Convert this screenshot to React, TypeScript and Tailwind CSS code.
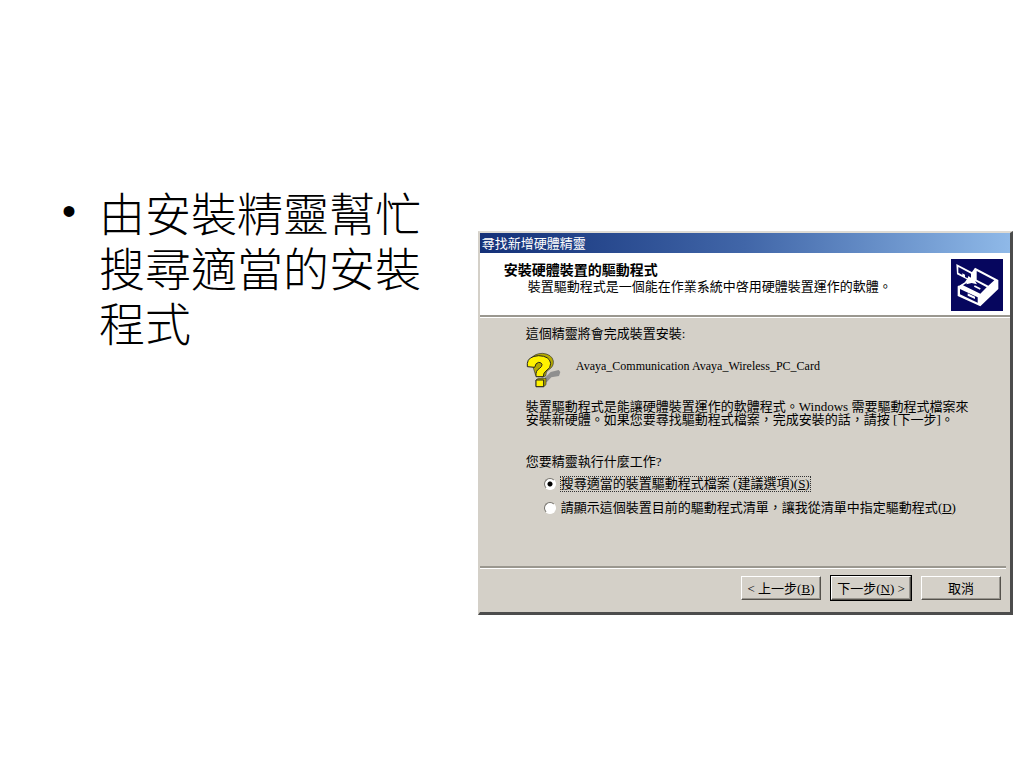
import React from 'react'

const DrawerIcon = () => (
  <svg viewBox="0 0 156 156" className="h-[52px] w-[52px] shrink-0" aria-hidden="true">
    <rect width="156" height="156" fill="#06065e" />
    <path d="M20 82 L44 66 L72 26 L142 63 L142 90 L88 142 L20 111 Z" fill="#fff" />
    <path d="M77 36 L130 64 L112 80 L77 62 Z" fill="#06065e" />
    <path d="M72 66 L107 85 L88 104 L36 79 L48 71 Z" fill="#06065e" />
    <path d="M27 90 L80 115 L80 131 L27 106 Z" fill="#06065e" />
    <path d="M50 103 L72 113 L72 120 L50 110 Z" fill="#fff" />
    <path d="M70 81 L88 90" stroke="#fff" strokeWidth="5" />
    <path d="M16 15 L68 42 L68 58 L78 76 L62 72 L46 76 L50 62 L18 46 Z" fill="#fff" />
    <path d="M22 24 L60 44 L60 56 L52 51 L50 58 L42 54 L42 47 L34 43 L34 48 L22 41 Z" fill="#06065e" />
    <path d="M18 54 L44 68 L24 80 Z" fill="#06065e" />
  </svg>
)

const QuestionIcon = () => (
  <svg viewBox="0 0 108 108" className="h-9 w-9 shrink-0" aria-hidden="true">
    <path d="M57 77 L74 60 L98 54 L103 60 L99 72 L76 76 L62 91 L54 91 Z" fill="#8f8f8f" />
    <path d="M14 22 Q24 4 50 4 Q78 7 82 27 Q84 44 68 53 Q59 58 59 72 L50 75 L29 70 Z" fill="#b5aa00" stroke="#333" strokeWidth="2" />
    <path
      d="M4 34 Q6 13 38 11 Q71 12 74 34 Q75 48 60 57 Q52 62 52 74 L30 74 Q28 55 41 49 Q49 43 48 37 Q46 31 38 31 Q29 32 26 46 L4 44 Z"
      fill="#fff200"
      stroke="#222"
      strokeWidth="3"
    />
    <path d="M30 84 L37 79 L60 79 L60 98 L53 104 L30 104 Z" fill="#b5aa00" stroke="#333" strokeWidth="2" />
    <path d="M30 84 H53 V104 H30 Z" fill="#fff200" stroke="#222" strokeWidth="3" />
  </svg>
)

const options = [
  { id: 'search', label: '搜尋適當的裝置驅動程式檔案 (建議選項)', hotkey: 'S', selected: true },
  { id: 'list', label: '請顯示這個裝置目前的驅動程式清單，讓我從清單中指定驅動程式', hotkey: 'D', selected: false },
]

const buttonStyle =
  'h-6 w-20 border border-t-white border-l-white border-r-[#55524c] border-b-[#55524c] bg-[#d4d0c8] shadow-[inset_-1px_-1px_0_#98958e]'

const WizardDialog = () => (
  <div
    role="dialog"
    aria-labelledby="wizard-title"
    className="border-t-2 border-l-2 border-r-3 border-b-3 border-t-[#dedbd4] border-l-[#d4d0c8] border-r-[#4c4c4c] border-b-[#4c4c4c] bg-[#d4d0c8] text-[13px] leading-[13px] text-black font-['Liberation_Serif','Noto_Sans_CJK_TC',sans-serif]"
  >
    <div
      id="wizard-title"
      className="flex h-5 items-center bg-linear-to-r from-[#143078] via-[#4166a8] to-[#8fb9e8] px-[2px] text-white"
    >
      尋找新增硬體精靈
    </div>

    <header className="flex h-16 items-start justify-between border-b-2 border-[#9a978f] bg-white pt-1.5 pr-[7px] pl-6">
      <div className="pt-1 whitespace-nowrap">
        <h2 className="text-sm leading-4 font-bold">安裝硬體裝置的驅動程式</h2>
        <p className="pl-6 leading-4">裝置驅動程式是一個能在作業系統中啓用硬體裝置運作的軟體。</p>
      </div>
      <DrawerIcon />
    </header>

    <main className="h-[249px] border-t border-white pt-2 pr-4 pl-[46px] whitespace-nowrap">
      <p className="leading-4">這個精靈將會完成裝置安裝:</p>
      <div className="mt-2.5 flex gap-3">
        <QuestionIcon />
        <p className="pt-1.5 pl-0.5 text-xs leading-4">Avaya_Communication Avaya_Wireless_PC_Card</p>
      </div>
      <p className="mt-3">
        裝置驅動程式是能讓硬體裝置運作的軟體程式。Windows 需要驅動程式檔案來
        <br />
        安裝新硬體。如果您要尋找驅動程式檔案，完成安裝的話，請按 [下一步]。
      </p>
      <fieldset className="mt-7">
        <legend className="leading-4">您要精靈執行什麼工作?</legend>
        <div className="mt-1.5 flex flex-col gap-2 pl-4">
          {options.map((option) => (
            <div key={option.id} className="flex h-4 items-center gap-1">
              <input
                type="radio"
                name="task"
                id={option.id}
                defaultChecked={option.selected}
                className="my-0.5 ml-0.5 h-3 w-3 shrink-0 appearance-none rounded-full border border-t-[#77746e] border-l-[#77746e] border-r-white border-b-white bg-white checked:bg-[radial-gradient(circle,#000_2px,#fff_3px)]"
              />
              <label
                htmlFor={option.id}
                className={option.selected ? 'border border-dotted border-[#333] leading-[14px]' : 'border border-transparent leading-[14px]'}
              >
                {option.label}(<u>{option.hotkey}</u>)
              </label>
            </div>
          ))}
        </div>
      </fieldset>
    </main>

    <footer className="mr-1 flex justify-end gap-2.5 border-t-2 border-[#9a978f] pt-2 pr-[5px] pb-3 whitespace-nowrap shadow-[inset_0_1px_0_#fff]">
      <button type="button" className={buttonStyle}>
        &lt; 上一步(<u>B</u>)
      </button>
      <button type="button" className={`${buttonStyle} outline outline-black`}>
        下一步(<u>N</u>) &gt;
      </button>
      <button type="button" className={buttonStyle}>
        取消
      </button>
    </footer>
  </div>
)

const App = () => {
  return (
    <div className="flex min-h-screen items-start bg-white">
      <section className="w-7/15 shrink-0 pt-[184px] pl-[62px]">
        <ul className="text-[46px] leading-[55px] font-light text-black font-['Noto_Sans_CJK_TC',sans-serif]">
          <li className="flex">
            <span className="w-[37px] shrink-0 text-[40px] font-['Liberation_Sans',sans-serif] font-normal" aria-hidden="true">
              •
            </span>
            <p className="w-[325px]">由安裝精靈幫忙搜尋適當的安裝程式</p>
          </li>
        </ul>
      </section>
      <section className="mt-[231px] mr-[11px] min-w-0 flex-1">
        <WizardDialog />
      </section>
    </div>
  )
}

export default App
